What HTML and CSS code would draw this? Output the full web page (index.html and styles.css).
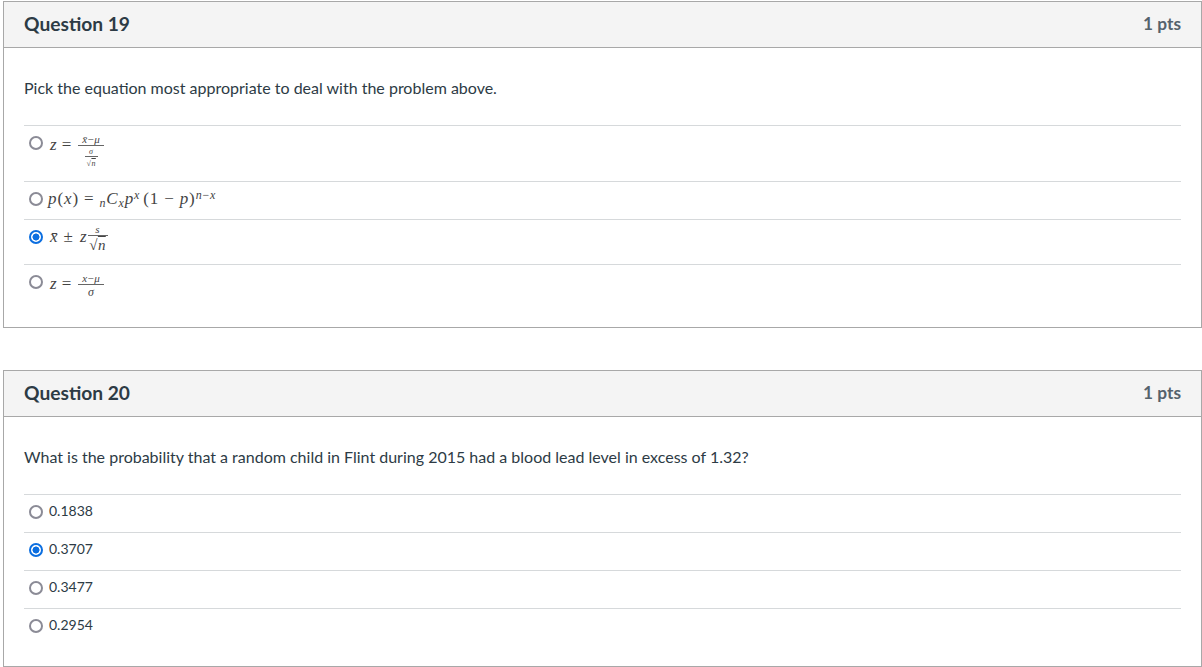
FILE: index.html
```html
<!DOCTYPE html>
<html lang="en">
<head>
<meta charset="utf-8">
<title>Quiz</title>
<link rel="stylesheet" href="styles.css">
</head>
<body>
<section class="card card-19">
  <header class="head"><h2 class="name">Question 19</h2><div class="pts">1 pts</div></header>
  <div class="content">
    <p class="prompt prompt-19">Pick the equation most appropriate to deal with the problem above.</p>
    <div class="answers">
      <div class="answer h56"><span class="radio at-top"></span>
        <span class="math m-nested"><i>z</i><span class="eq">=</span><span class="frac f-nested"><span class="num"><i>x̄</i>−<i>μ</i></span><span class="den"><span class="frac small"><span class="num"><i>σ</i></span><span class="den">√<i class="over">n</i></span></span></span></span></span>
      </div>
      <div class="answer h38"><span class="radio"></span>
        <span class="math m-line"><i>p</i>(<i>x</i>)<span class="eq">=</span><sub><i>n</i></sub><i>C</i><sub><i>x</i></sub><i>p</i><sup><i>x</i></sup><span class="gap">(1<span class="op">−</span><i>p</i>)</span><sup><i>n</i>−<i>x</i></sup></span>
      </div>
      <div class="answer h45"><span class="radio on at-mid"></span>
        <span class="math m-ci"><i>x̄</i><span class="eq eq-wide">±</span><i>z</i><span class="frac f-ci"><span class="num"><i>s</i></span><span class="den big">√<i class="over">n</i></span></span></span>
      </div>
      <div class="answer h45"><span class="radio at-mid"></span>
        <span class="math m-std"><i>z</i><span class="eq">=</span><span class="frac f-std"><span class="num"><i>x</i>−<i>μ</i></span><span class="den den-sigma"><i>σ</i></span></span></span>
      </div>
    </div>
  </div>
</section>
<section class="card card-20">
  <header class="head"><h2 class="name">Question 20</h2><div class="pts">1 pts</div></header>
  <div class="content">
    <p class="prompt prompt-20">What is the probability that a random child in Flint during 2015 had a blood lead level in excess of 1.32?</p>
    <div class="answers">
      <div class="answer h38"><span class="radio"></span><span class="txt">0.1838</span></div>
      <div class="answer h38"><span class="radio on"></span><span class="txt">0.3707</span></div>
      <div class="answer h38"><span class="radio"></span><span class="txt">0.3477</span></div>
      <div class="answer h38"><span class="radio"></span><span class="txt">0.2954</span></div>
    </div>
  </div>
</section>
</body>
</html>
```
FILE: styles.css
```css
* { box-sizing: border-box; }
html, body { margin: 0; background: #fff; }
body {
  padding: 1px 0 0 3px;
  font-family: Lato, "Liberation Sans", sans-serif;
  color: #2d3b45;
  height: 667px;
  overflow: hidden;
}
.card { width: 1199px; border: 1px solid #a8a8a8; background: #fff; }
.card-19 { height: 327px; margin-bottom: 42px; }
.card-20 { height: 297px; }
.head {
  height: 46px;
  background: #f4f4f4;
  border-bottom: 1px solid #a8a8a8;
  padding: 0 20px 2px;
  display: flex;
  justify-content: space-between;
  align-items: center;
}
.name { margin: 0; font-size: 19.2px; font-weight: 700; line-height: 42px; }
.pts { font-size: 17.3px; font-weight: 700; color: #55626c; line-height: 24px; }
.content { padding: 0 20px; }
.prompt { margin: 0; font-size: 16px; line-height: 24px; }
.prompt-19 { padding-top: 28px; height: 77px; }
.prompt-20 { padding-top: 28px; height: 77px; }
.answer {
  border-top: 1px solid #d6d9db;
  display: flex;
  align-items: flex-start;
  font-size: 14px;
}
.h56 { height: 56px; }
.h38 { height: 38px; align-items: center; padding-bottom: 5px; }
.h45 { height: 45px; }
.txt { margin-bottom: 2px; }
.radio {
  flex: none;
  width: 14px;
  height: 14px;
  margin: 2px 6px 0 5px;
  border: 2px solid #8b8b96;
  border-radius: 50%;
  background: #fff;
}
.at-top { margin-top: 10px; }
.at-mid { margin-top: 10px; }
.radio.on {
  border-color: #0b6ee0;
  background: radial-gradient(circle, #0b6ee0 0 3.2px, #fff 3.8px);
}
.math {
  font-family: "Liberation Serif", "DejaVu Serif", serif;
  font-size: 17px;
  line-height: 20px;
  color: #444;
  white-space: pre;
  display: block;
}
.m-line { letter-spacing: 0.9px; margin-left: -1px; margin-top: 2px; }
.m-nested { margin-left: 1px; margin-top: 9px; }
.m-ci { margin-left: 1px; margin-top: 4px; }
.m-std { margin-left: 1px; margin-top: 8px; }
.eq { margin: 0 5px; }
.eq-wide { margin: 0 7px 0 6px; }
.op { margin: 0 5px; }
.gap { margin-left: 3px; }
.math sub, .math sup { font-size: 12px; line-height: 0; letter-spacing: 0.8px; }
.math sup { vertical-align: 5px; }
.math sub { vertical-align: -3px; }
.frac {
  display: inline-flex;
  flex-direction: column;
  align-items: center;
  vertical-align: middle;
  font-size: 11px;
  line-height: 11px;
  letter-spacing: 0.4px;
}
.f-nested { width: 26px; margin-left: 2px; margin-top: -10px; margin-bottom: -20px; }
.f-std { width: 26px; margin-left: 2px; }
.f-ci { width: 20px; margin-left: 1px; }
.num { border-bottom: 1px solid #666; width: 100%; text-align: center; }
.den { padding-top: 1px; }
.den-sigma { font-size: 12px; padding-top: 2px; }
.den.big { font-size: 15px; line-height: 15px; padding-top: 2px; }
.frac.small { font-size: 8px; line-height: 9px; width: 13px; }
.frac.small .den { padding-top: 2px; }
.over { text-decoration: overline; }
```
